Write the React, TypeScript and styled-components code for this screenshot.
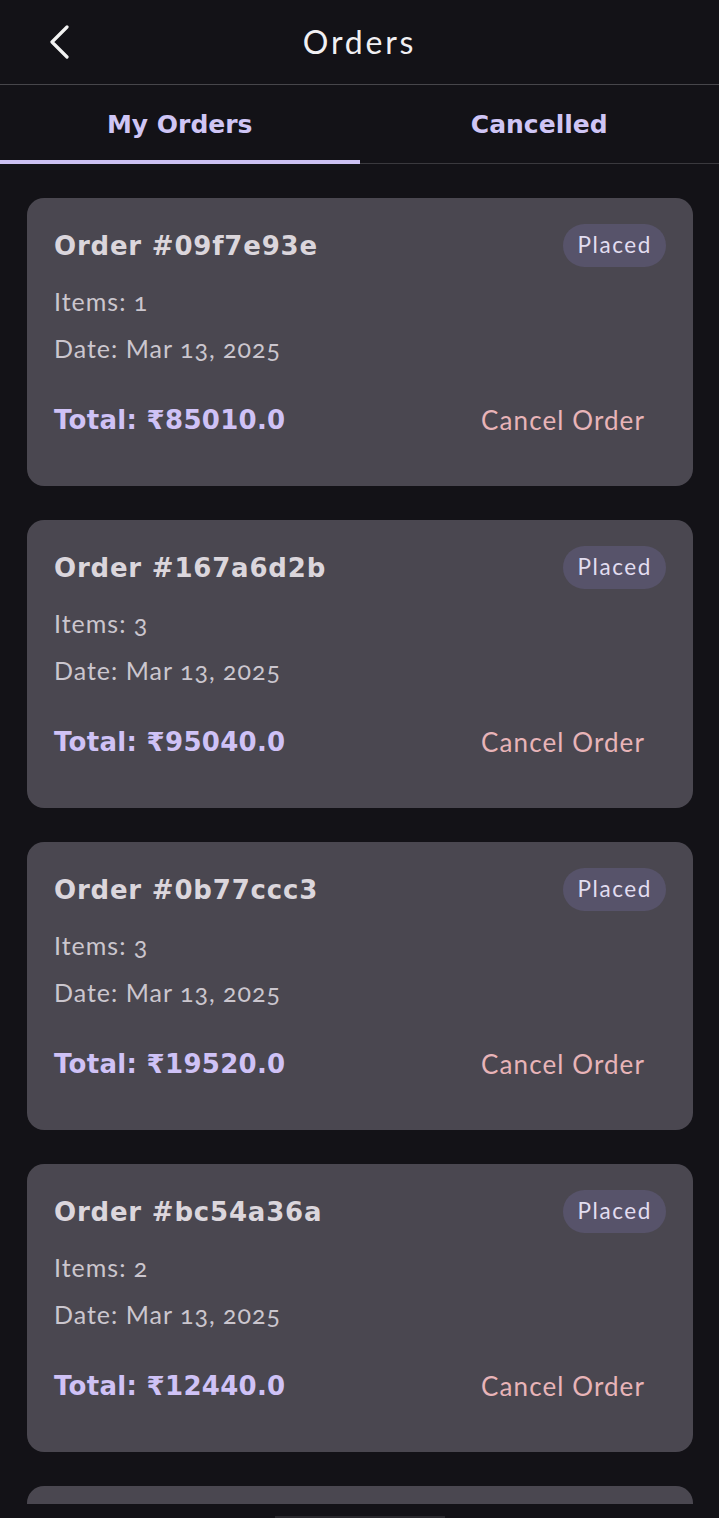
import React from "react";
import styled, { createGlobalStyle } from "styled-components";

const GlobalStyle = createGlobalStyle`
  html, body {
    margin: 0;
    padding: 0;
    background: #131217;
    overflow: hidden;
  }
  * { box-sizing: border-box; }
`;

const Screen = styled.div`
  width: 719px;
  height: 1518px;
  display: flex;
  flex-direction: column;
  background: #131217;
  overflow: hidden;
`;

const Header = styled.header`
  height: 85px;
  flex: none;
  display: grid;
  grid-template-columns: 120px 1fr 120px;
  align-items: center;
  border-bottom: 1px solid #47464b;
`;

const BackButton = styled.button`
  background: none;
  border: none;
  padding: 0 0 0 48px;
  display: flex;
  align-items: center;
  height: 40px;
  cursor: pointer;
`;

const Title = styled.h1`
  margin: 0;
  text-align: center;
  font-family: "Lato", sans-serif;
  font-weight: 400;
  font-size: 32px;
  letter-spacing: 2.8px;
  color: #f1f0f3;
  padding-bottom: 2px;
`;

const Tabs = styled.nav`
  height: 79px;
  flex: none;
  display: grid;
  grid-template-columns: 1fr 1fr;
  border-bottom: 1px solid #3a393e;
`;

const Tab = styled.div<{ $active?: boolean }>`
  display: flex;
  align-items: center;
  justify-content: center;
  font-family: "DejaVu Sans", sans-serif;
  font-weight: 700;
  font-size: 25px;
  color: #cfc5f5;
  padding-top: 4px;
  margin-bottom: -1px;
  border-bottom: 4px solid ${(p) => (p.$active ? "#cbc0f2" : "transparent")};
`;

const List = styled.main`
  flex: 1;
  overflow: hidden;
  display: flex;
  flex-direction: column;
  gap: 34px;
  padding: 34px 26px 0 27px;
`;

const Card = styled.article`
  flex: none;
  height: 288px;
  border-radius: 17px;
  background: #4a4750;
  padding: 26px 27px 0 27px;
  display: flex;
  flex-direction: column;
`;

const TopRow = styled.div`
  display: flex;
  justify-content: space-between;
  align-items: center;
  height: 43px;
`;

const OrderId = styled.h2`
  margin: 0;
  font-family: "DejaVu Sans", sans-serif;
  font-weight: 700;
  font-size: 26px;
  color: #dbd6dc;
  letter-spacing: 0.8px;
`;

const Badge = styled.span`
  height: 43px;
  padding: 0 14px;
  border-radius: 22px;
  background: #57536a;
  display: flex;
  align-items: center;
  font-family: "Lato", sans-serif;
  font-size: 22.5px;
  letter-spacing: 1.6px;
  color: #e2ddf0;
  padding-bottom: 2px;
`;

const Detail = styled.p`
  margin: 0;
  font-family: "Lato", sans-serif;
  font-weight: 400;
  font-size: 25px;
  line-height: 30px;
  color: #cbc6ce;
  letter-spacing: 1px;
  font-variant-numeric: oldstyle-nums;
`;

const Details = styled.div`
  margin-top: 19px;
  display: flex;
  flex-direction: column;
  gap: 17px;
`;

const BottomRow = styled.div`
  margin-top: 35px;
  display: flex;
  justify-content: space-between;
  align-items: center;
`;

const Total = styled.span`
  font-family: "DejaVu Sans", sans-serif;
  font-weight: 700;
  font-size: 26px;
  color: #cfc2f6;
  letter-spacing: 0.3px;
`;

const CancelButton = styled.button`
  background: none;
  border: none;
  padding: 6px 21px 6px 0;
  font-family: "Lato", sans-serif;
  font-size: 26px;
  letter-spacing: 1.1px;
  color: #e8b4b8;
  cursor: pointer;
`;

const NavBar = styled.div`
  height: 14px;
  flex: none;
  display: flex;
  justify-content: center;
  align-items: flex-end;
`;

const Handle = styled.div`
  width: 170px;
  height: 2px;
  background: #2a292e;
`;

const ChevronLeft = () => (
  <svg width="22" height="34" viewBox="0 0 22 34" fill="none">
    <path d="M19 2 L4 17 L19 32" stroke="#f2f2f2" strokeWidth="3.2" strokeLinecap="round" strokeLinejoin="round" />
  </svg>
);

const orders = [
  { id: "09f7e93e", items: 1, total: "85010.0" },
  { id: "167a6d2b", items: 3, total: "95040.0" },
  { id: "0b77ccc3", items: 3, total: "19520.0" },
  { id: "bc54a36a", items: 2, total: "12440.0" },
];

export default function App() {
  return (
    <>
      <GlobalStyle />
      <Screen>
        <Header>
          <BackButton aria-label="Back">
            <ChevronLeft />
          </BackButton>
          <Title>Orders</Title>
          <div />
        </Header>
        <Tabs>
          <Tab $active>My Orders</Tab>
          <Tab>Cancelled</Tab>
        </Tabs>
        <List>
          {orders.map((o) => (
            <Card key={o.id}>
              <TopRow>
                <OrderId>Order #{o.id}</OrderId>
                <Badge>Placed</Badge>
              </TopRow>
              <Details>
                <Detail>Items: {o.items}</Detail>
                <Detail>Date: Mar 13, 2025</Detail>
              </Details>
              <BottomRow>
                <Total>Total: ₹{o.total}</Total>
                <CancelButton>Cancel Order</CancelButton>
              </BottomRow>
            </Card>
          ))}
          <Card aria-hidden="true" />
        </List>
        <NavBar>
          <Handle />
        </NavBar>
      </Screen>
    </>
  );
}
